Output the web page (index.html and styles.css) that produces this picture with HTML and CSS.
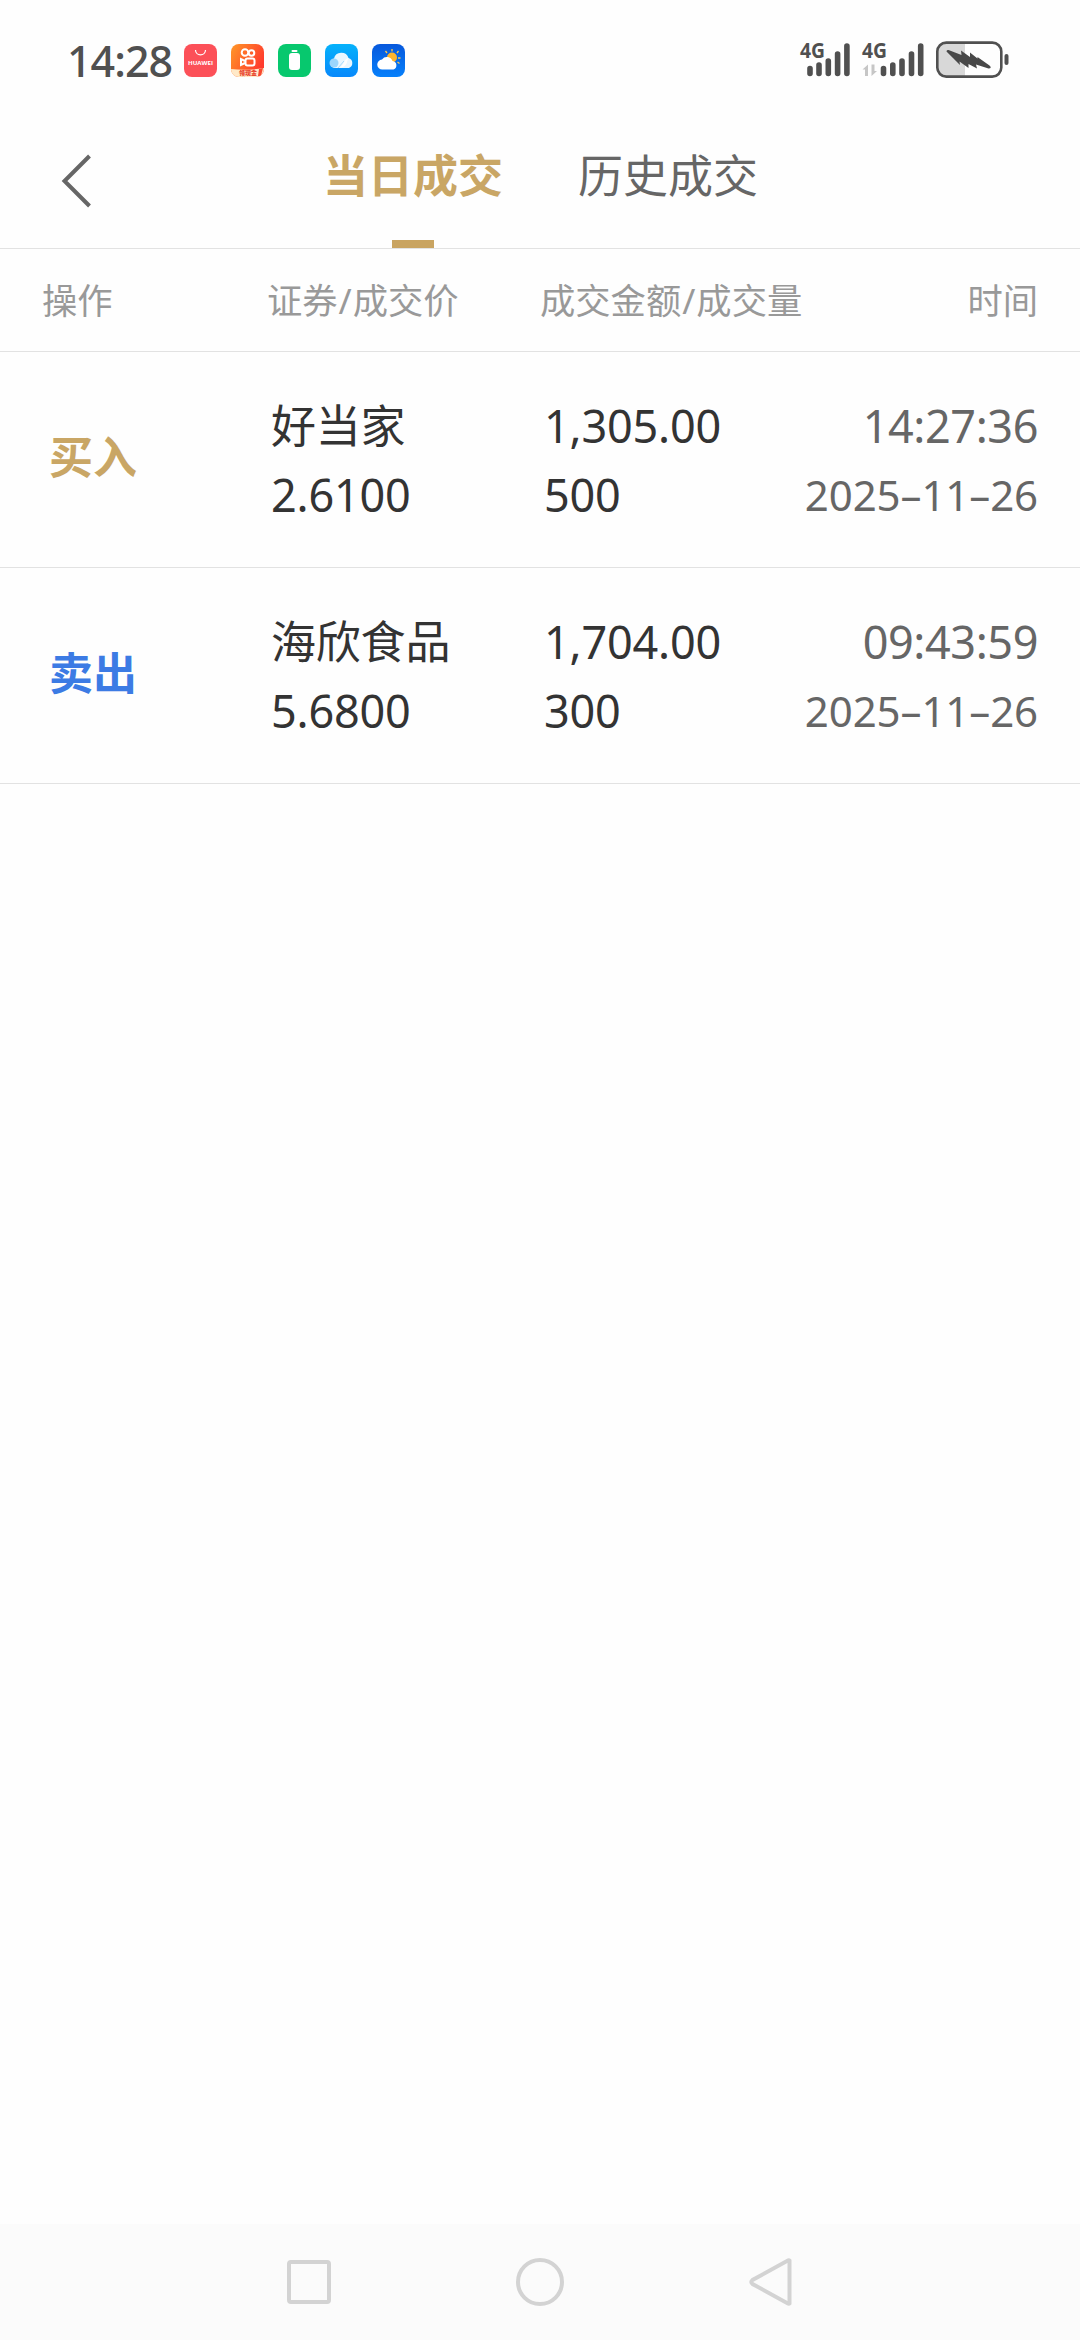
FILE: index.html
```html
<!DOCTYPE html>
<html lang="zh-CN">
<head>
    <meta charset="UTF-8">
    <meta name="viewport" content="width=device-width, initial-scale=1.0">
    <title>当日成交</title>
    <link rel="stylesheet" href="styles.css">
</head>
<body>
    <div class="status-bar">
        <span class="clock">14:28</span>
        <div class="app-icons">
            <svg width="33" height="33" viewBox="0 0 33 33">
                <rect width="33" height="33" rx="8" fill="#fc5058"/>
                <path d="M11.500 6c0 6.500 10 6.500 10 0" fill="none" stroke="#fff" stroke-width="1.200"/>
                <text x="16.500" y="21" class="huawei" textLength="25" lengthAdjust="spacingAndGlyphs">HUAWEI</text>
            </svg>
            <svg width="33" height="33" viewBox="0 0 33 33">
                <defs>
                    <linearGradient id="orange" x1="0" y1="0" x2="1" y2="0.500">
                        <stop offset="0" stop-color="#ff9827"/>
                        <stop offset="1" stop-color="#ff3a2d"/>
                    </linearGradient>
                    <clipPath id="round"><rect width="33" height="33" rx="8"/></clipPath>
                </defs>
                <g clip-path="url(#round)">
                    <rect width="33" height="33" fill="url(#orange)"/>
                    <path d="M0 25q16 2 33-1v9H0z" fill="#ffe9c8"/>
                    <g fill="none" stroke="#fff" stroke-width="2">
                        <circle cx="14" cy="8.500" r="3.300"/>
                        <circle cx="20.500" cy="9" r="2.800"/>
                        <rect x="14.500" y="14.500" width="9" height="7" rx="2"/>
                        <path d="M14 17l-4-2v6l4-2"/>
                    </g>
                    <text x="17" y="31" class="promo">领现金</text>
                    <path d="M27 32l1-7 4-1-2 8z" fill="#f8482f"/>
                </g>
            </svg>
            <svg width="33" height="33" viewBox="0 0 33 33">
                <rect width="33" height="33" rx="8" fill="#07c86e"/>
                <rect x="13.500" y="6" width="6" height="2" rx="1" fill="#fff"/>
                <rect x="11" y="9" width="11" height="17" rx="3" fill="#fff"/>
            </svg>
            <svg width="33" height="33" viewBox="0 0 33 33">
                <defs>
                    <linearGradient id="sky" x1="0" y1="0" x2="0" y2="1">
                        <stop offset="0" stop-color="#05b2fb"/>
                        <stop offset="1" stop-color="#0788fb"/>
                    </linearGradient>
                </defs>
                <rect width="33" height="33" rx="8" fill="url(#sky)"/>
                <path d="M9 24a5 5 0 0 1 0-9.500a7.500 7.500 0 0 1 14.500-.5a5.300 5.300 0 0 1 .5 10z" fill="#e9f7ff"/>
                <circle cx="9" cy="19" r="4.500" fill="#9bd6fc"/>
                <path d="M14 24c4 0 4-9 9.500-10-2 4-1 9-9.500 10z" fill="#fff"/>
                <path d="M13 24l6-7" stroke="#a6dafc" stroke-width="1"/>
            </svg>
            <svg width="33" height="33" viewBox="0 0 33 33">
                <defs>
                    <linearGradient id="blue" x1="0" y1="0" x2="0" y2="1">
                        <stop offset="0" stop-color="#0758dc"/>
                        <stop offset="1" stop-color="#0680fb"/>
                    </linearGradient>
                </defs>
                <rect width="33" height="33" rx="8" fill="url(#blue)"/>
                <circle cx="20" cy="13.500" r="5" fill="#ffb52b"/>
                <path d="M20 5v2.500M13.500 7l1.500 2M26.500 7l-1.500 2M26 14h2.500M25.500 18l2 1.500" stroke="#ffc84a" stroke-width="1.300"/>
                <path d="M10.500 25.500a5 5 0 0 1-.5-10a6 6 0 0 1 10.500 1.500a4.400 4.400 0 0 1 1 8.500z" fill="#fff"/>
            </svg>
        </div>
        <svg class="system-icons" width="216" height="56" viewBox="0 -8 216 56">
            <g class="net">
                <text x="3" y="18" textLength="25" lengthAdjust="spacingAndGlyphs">4G</text>
                <text x="65" y="18" textLength="25" lengthAdjust="spacingAndGlyphs">4G</text>
            </g>
            <g stroke="#505050" stroke-width="5.600" stroke-linecap="round">
                <path d="M13 28.500v5M22 25v8.500M31.300 21v12.500M40.600 14v19.500M49.900 6v27.500"/>
                <path d="M86.500 28.500v5M95.800 25v8.500M105 21v12.500M114.500 14v19.500M123.700 6v27.500"/>
            </g>
            <path d="M65.500 29.500l5.500-5v11.500h-3v-6.500zM80 31l-5.500 5V24.500h3V31z" fill="#c6c6c6"/>
            <path d="M150 3h-4a9 9 0 0 0-9 9v14a9 9 0 0 0 9 9h20V3z" transform="translate(2 1)" fill="#d8d8d8"/>
            <rect x="140.300" y="2.600" width="64" height="34" rx="9" fill="none" stroke="#505050" stroke-width="2.600"/>
            <path d="M209.500 16v7" stroke="#505050" stroke-width="4" stroke-linecap="round"/>
            <path d="M149.500 11.500q0-2 2-1.500l13 5-.5-4.500 9 6.500v-4.500l7.500 6v-1.500l12 8.500q3 2.500-1 3l-12.500-4 1 4-8.500-4.500v4l-9-6.500 .5 3.500z" fill="#484848"/>
        </svg>
    </div>

    <div class="top-bar">
        <svg class="back" width="32" height="54" viewBox="0 0 32 54">
            <path d="M28.500 2L3.500 27l25 25" fill="none" stroke="#666" stroke-width="4"/>
        </svg>
        <div class="tabs">
            <div class="tab active">当日成交</div>
            <div class="tab">历史成交</div>
        </div>
    </div>

    <div class="row table-head">
        <span>操作</span>
        <span>证券<i>/</i>成交价</span>
        <span>成交金额<i>/</i>成交量</span>
        <span class="right">时间</span>
    </div>

    <div class="row trade">
        <div class="side buy">买入</div>
        <div class="cell">
            <div>好当家</div>
            <div>2.6100</div>
        </div>
        <div class="cell">
            <div>1,305.00</div>
            <div>500</div>
        </div>
        <div class="cell time">
            <div>14:27:36</div>
            <div class="date">2025–11–26</div>
        </div>
    </div>

    <div class="row trade">
        <div class="side sell">卖出</div>
        <div class="cell">
            <div>海欣食品</div>
            <div>5.6800</div>
        </div>
        <div class="cell">
            <div>1,704.00</div>
            <div>300</div>
        </div>
        <div class="cell time">
            <div>09:43:59</div>
            <div class="date">2025–11–26</div>
        </div>
    </div>

    <div class="nav-bar">
        <svg width="50" height="50" viewBox="0 0 50 50">
            <rect x="5" y="5" width="40" height="40" rx="2"/>
        </svg>
        <svg width="50" height="50" viewBox="0 0 50 50">
            <circle cx="25" cy="25" r="22"/>
        </svg>
        <svg width="50" height="50" viewBox="0 0 50 50">
            <path d="M43.500 3.500v43a1 1 0 0 1-1.500 0L6.500 27q-2.500-2 0-4L42 3.500a1 1 0 0 1 1.500 0z"/>
        </svg>
    </div>
</body>
</html>
```
FILE: styles.css
```css
* {
    box-sizing: border-box;
}

body {
    margin: 0;
    height: 2340px;
    display: flex;
    flex-direction: column;
    background-color: #fefefe;
    font-family: "Noto Sans", "Noto Sans CJK SC", sans-serif;
    color: #333;
}

.status-bar {
    height: 120px;
    padding: 0 67px;
    display: flex;
    align-items: center;
}

.clock {
    width: 117px;
    padding-top: 2px;
    font-size: 43px;
    font-weight: 500;
    line-height: 60px;
    letter-spacing: -1px;
    color: #505050;
}

.app-icons {
    display: flex;
    gap: 14px;
    padding-top: 1px;
}

.huawei {
    font-family: "Open Sans", sans-serif;
    font-size: 6px;
    font-weight: 700;
    fill: #fff;
    text-anchor: middle;
}

.promo {
    font-family: "Noto Sans CJK SC", sans-serif;
    font-size: 6px;
    font-weight: 900;
    fill: #e8432c;
    text-anchor: middle;
}

.system-icons {
    margin-left: auto;
}

.net {
    font-family: "Noto Sans", sans-serif;
    font-size: 22px;
    font-weight: 700;
    fill: #505050;
}

.top-bar {
    height: 129px;
    padding-left: 61px;
    display: flex;
    border-bottom: 1px solid #e2e2e2;
}

.back {
    margin-top: 34px;
}

.tabs {
    display: flex;
    gap: 75px;
    margin-left: 230px;
}

.tab {
    width: 180px;
    height: 128px;
    display: flex;
    flex-direction: column;
    align-items: center;
    justify-content: space-between;
    padding-top: 26px;
    font-size: 45px;
    line-height: 60px;
    color: #666;
}

.active {
    font-weight: 700;
    color: #c9a665;
}

.active::after {
    content: "";
    width: 42px;
    height: 8px;
    background-color: #c9a461;
}

.row {
    display: grid;
    grid-template-columns: 225px 273px 250px 1fr;
    padding: 0 42px;
    border-bottom: 1px solid #e2e2e2;
}

.table-head {
    height: 103px;
    padding-bottom: 4px;
    align-items: center;
    font-size: 35.3px;
    color: #999;
    white-space: nowrap;
}

.table-head i {
    padding: 0 1px;
    font-style: normal;
}

.right {
    text-align: right;
}

.trade {
    height: 216px;
    align-items: center;
}

.side {
    padding: 0 0 5px 7px;
    font-size: 44px;
    font-weight: 700;
    line-height: 60px;
}

.buy {
    color: #c9a665;
}

.sell {
    color: #3c7be4;
}

.cell {
    padding-left: 4px;
    font-size: 45px;
    line-height: 69px;
    letter-spacing: -0.2px;
    white-space: nowrap;
}

.time {
    padding-left: 0;
    text-align: right;
    letter-spacing: -0.4px;
    color: #666;
}

.date {
    font-size: 42px;
    letter-spacing: -0.1px;
}

.nav-bar {
    height: 116px;
    margin-top: auto;
    padding: 0 284px;
    display: flex;
    align-items: center;
    justify-content: space-between;
    background-color: #fbfbfb;
}

.nav-bar svg {
    fill: none;
    stroke: #d3d3d3;
    stroke-width: 4;
}
```
